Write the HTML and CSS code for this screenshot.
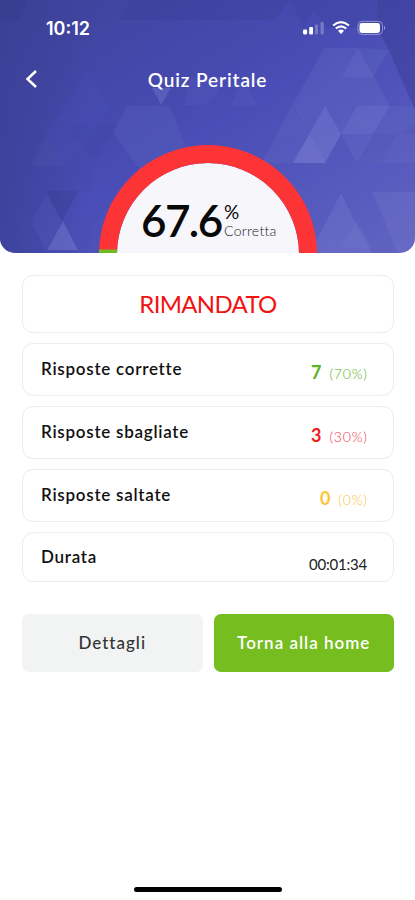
FILE: index.html
```html
<!DOCTYPE html>
<html lang="it">
<head>
    <meta charset="UTF-8">
    <meta name="viewport" content="width=device-width, initial-scale=1">
    <title>Quiz Peritale</title>
    <link rel="stylesheet" href="styles.css">
</head>
<body>
    <div class="screen">
        <header class="hero">
            <!-- Triangle pattern -->
            <svg class="hero-pattern" viewBox="0 0 415 253" aria-hidden="true">
                <defs>
                    <linearGradient id="sky" x1="0" y1="0" x2="1" y2="1">
                        <stop offset="0" stop-color="#3e4298"/>
                        <stop offset="0.25" stop-color="#4347a8"/>
                        <stop offset="0.5" stop-color="#494db5"/>
                        <stop offset="0.75" stop-color="#5558bd"/>
                        <stop offset="1" stop-color="#6264c0"/>
                    </linearGradient>
                    <linearGradient id="edge" x1="0" y1="0" x2="1" y2="0">
                        <stop offset="0" stop-color="#3a3f94" stop-opacity="0.7"/>
                        <stop offset="1" stop-color="#3a3f94" stop-opacity="0"/>
                    </linearGradient>
                </defs>
                <rect width="415" height="253" fill="url(#sky)"/>
                <rect width="95" height="253" fill="url(#edge)"/>
                <g fill="#34388a">
                    <path d="M377 0H415V110L389 50L377 28Z" opacity="0.4"/>
                    <path d="M290 0H377V28H325L314 10L304 28Z" opacity="0.18"/>
                    <path d="M130 0H290L276 20H120Z" opacity="0.2"/>
                    <path d="M0 0H27L18 20H0Z" opacity="0.3"/>
                    <path d="M46 191H78L62 221Z" opacity="0.3"/>
                    <path d="M65 125H118L94 161Z" opacity="0.12"/>
                    <path d="M375 134H415V125L398 134L380 163H358Z" opacity="0.1"/>
                </g>
                <g fill="#8e91dc">
                    <path d="M292 50L276 77L326 163H293L325 106L308 77L292 106L276 77Z" opacity="0.14"/>
                    <path d="M324 48H358L390 106L357 163L341 134L325 106L308 77Z" opacity="0.14"/>
                    <path d="M358 48L342 77H373L389 50Z" opacity="0.12"/>
                    <path d="M325 106L293 163H325L341 134Z" opacity="0.34"/>
                    <path d="M357 106H390L373 134H341Z" opacity="0.16"/>
                    <path d="M390 106H415V163H358Z" opacity="0.1"/>
                    <path d="M341 193L310 253H372L354 220Z" opacity="0.2"/>
                    <path d="M357 220L341 248H372Z" opacity="0.1"/>
                    <path d="M372 192H415V253H398Z" opacity="0.15"/>
                    <path d="M292 106L277 134H309Z" opacity="0.12"/>
                    <path d="M277 134L262 163H293L309 134Z" opacity="0.1"/>
                    <path d="M230 106H258L243 78Z" opacity="0.08"/>
                    <path d="M152 88H171L161 105Z" opacity="0.26"/>
                    <path d="M127 106H169L186 145L140 170L113 132Z" opacity="0.1"/>
                    <path d="M63 221L47 250H78Z" opacity="0.34"/>
                    <path d="M46 194L31 222L46 250L62 221Z" opacity="0.08"/>
                    <path d="M46 135L31 166H65Z" opacity="0.06"/>
                    <path d="M191 78H227L208 105H183Z" opacity="0.07"/>
                </g>
                <path d="M65 106L85 70L110 106L94 132L64 167L78 191H110L94 222L78 250L62 221L78 191L46 135Z" fill="#4c52c0" opacity="0.22"/>
            </svg>

            <!-- Status bar -->
            <div class="status-bar">
                <span class="clock">10:12</span>
                <svg class="status-icons" width="86" height="18" viewBox="0 0 86 18" aria-hidden="true">
                    <g fill="#fff">
                        <rect x="1" y="10.5" width="4.2" height="5" rx="1.4"/>
                        <rect x="7.2" y="8" width="3.8" height="7.5" rx="1"/>
                        <rect x="13" y="5.5" width="3" height="10" rx="1" opacity="0.25"/>
                        <rect x="18.5" y="3" width="3.4" height="12.5" rx="1" opacity="0.25"/>
                    </g>
                    <g fill="none" stroke="#fff" stroke-width="2.2">
                        <path d="M31.1 6.5Q39 -0.2 46.9 6.5"/>
                        <path d="M33.8 9.5Q39 5.1 44.2 9.5"/>
                    </g>
                    <path d="M36 11.7Q39 9.5 42 11.7L39 15Z" fill="#fff"/>
                    <rect x="56" y="2.4" width="24.5" height="13" rx="4" fill="none" stroke="#fff" opacity="0.4"/>
                    <rect x="57.5" y="4" width="20.5" height="10" rx="2.4" fill="#fff"/>
                    <path d="M82 6.5Q84.2 8.8 82 11Z" fill="#fff" opacity="0.5"/>
                </svg>
            </div>

            <!-- Title bar -->
            <div class="title-bar">
                <svg class="back" width="14" height="20" viewBox="0 0 14 20" role="img" aria-label="Indietro">
                    <path d="M12 2L3.5 10L12 18" fill="none" stroke="#fff" stroke-width="2.5"/>
                </svg>
                <h1>Quiz Peritale</h1>
            </div>

            <!-- Score gauge -->
            <div class="gauge">
                <svg class="gauge-arc" width="218" height="108" viewBox="0 0 218 108" aria-hidden="true">
                    <path d="M18 109A91 91 0 0 1 200 109Z" fill="#f6f6fb"/>
                    <path d="M9 109A100 100 0 0 1 209 109" fill="none" stroke="#fd3435" stroke-width="18"/>
                    <path d="M0 104.5H18V108H0Z" fill="#72ba20"/>
                </svg>
                <div class="score">
                    <span class="score-value">67.6</span>
                    <span class="score-side">
                        <span class="percent">%</span>
                        <span class="caption">Corretta</span>
                    </span>
                </div>
            </div>
        </header>

        <main class="results">
            <div class="card outcome">RIMANDATO</div>
            <div class="card row">
                <span class="label">Risposte corrette</span>
                <span class="value correct"><b>7</b><small>(70%)</small></span>
            </div>
            <div class="card row">
                <span class="label">Risposte sbagliate</span>
                <span class="value wrong"><b>3</b><small>(30%)</small></span>
            </div>
            <div class="card row">
                <span class="label">Risposte saltate</span>
                <span class="value skipped"><b>0</b><small>(0%)</small></span>
            </div>
            <div class="card row duration">
                <span class="label">Durata</span>
                <span class="value time">00:01:34</span>
            </div>
            <div class="actions">
                <button class="btn">Dettagli</button>
                <button class="btn btn-primary">Torna alla home</button>
            </div>
        </main>

        <div class="home-indicator"></div>
    </div>
</body>
</html>
```

FILE: styles.css
```css
* {
    box-sizing: border-box;
}

body {
    margin: 0;
    background: #fff;
    color: #111;
    font-family: Lato, "Open Sans", sans-serif;
}

.screen {
    display: flex;
    flex-direction: column;
    height: 900px;
    overflow: hidden;
}

/* Header */
.hero {
    position: relative;
    display: flex;
    flex-direction: column;
    height: 253px;
    border-radius: 0 0 15px 15px;
    overflow: hidden;
    color: #fff;
}

.hero-pattern {
    position: absolute;
    inset: 0;
    width: 100%;
    height: 100%;
}

.status-bar,
.title-bar,
.gauge {
    position: relative;
}

.status-bar {
    display: flex;
    justify-content: space-between;
    align-items: center;
    height: 56px;
    padding: 0 27px 0 46px;
}

.clock {
    font-family: Inter, sans-serif;
    font-size: 18px;
    font-weight: 600;
    letter-spacing: 0;
}

.title-bar {
    display: grid;
    grid-template-columns: 24px 1fr 24px;
    align-items: center;
    height: 46px;
    padding: 0 24px;
}

h1 {
    margin: 0;
    font-size: 19px;
    font-weight: 600;
    letter-spacing: 0.9px;
    text-align: center;
}

/* Gauge */
.gauge {
    display: grid;
    justify-content: center;
    width: 218px;
    margin: auto auto 0 99px;
}

.gauge-arc,
.score {
    grid-area: 1 / 1;
}

.gauge-arc {
    display: block;
}

.score {
    display: flex;
    align-self: end;
    height: 52px;
    padding-left: 42px;
    color: #080808;
}

.score-value {
    width: 83px;
    font-size: 44px;
    font-weight: 600;
    line-height: 38px;
    letter-spacing: -1.6px;
}

.score-side {
    display: flex;
    flex-direction: column;
}

.percent {
    font-size: 19px;
    line-height: 21px;
}

.caption {
    font-size: 14px;
    font-weight: 300;
    line-height: 18px;
    letter-spacing: 0.3px;
    color: #222;
}

/* Results */
.results {
    display: flex;
    flex-direction: column;
    gap: 10px;
    padding: 22px 21px 0 22px;
}

.card {
    height: 53px;
    border: 1.5px solid #ececec;
    border-radius: 11px;
}

.outcome {
    height: 58px;
    color: #f31212;
    font-size: 24px;
    line-height: 56px;
    letter-spacing: -0.7px;
    text-align: center;
}

.row {
    display: flex;
    justify-content: space-between;
    padding: 0 26px 0 18px;
}

.label {
    font-size: 17px;
    font-weight: 600;
    line-height: 50px;
    letter-spacing: 0.73px;
}

.value {
    display: flex;
    align-items: baseline;
    gap: 8px;
    padding-top: 3px;
    line-height: 50px;
}

.value b {
    font-size: 18px;
}

.value small {
    font-size: 14px;
    font-weight: 300;
    letter-spacing: 0.8px;
    margin-right: -0.8px;
}

.correct {
    color: #5bb224;
}

.wrong {
    color: #ed2020;
}

.wrong small {
    color: #ee4050;
}

.skipped {
    color: #fac536;
}

.duration {
    height: 50px;
}

.duration .label {
    line-height: 48px;
}

.time {
    padding-top: 6px;
    color: #222;
    font-size: 15px;
    letter-spacing: -0.2px;
}

/* Buttons */
.actions {
    display: grid;
    grid-template-columns: 1fr 1fr;
    gap: 11px;
    margin-top: 22px;
}

.btn {
    height: 58px;
    padding: 0 0 2px;
    border: 0;
    border-radius: 7px;
    background: #f1f4f3;
    color: #333;
    font: 500 17px Lato, sans-serif;
    letter-spacing: 1px;
}

.btn-primary {
    background: #76bd1f;
    color: #fff;
    font-weight: 600;
}

.home-indicator {
    width: 148px;
    height: 5px;
    margin: auto auto 8px 134px;
    border-radius: 3px;
    background: #000;
}
```
